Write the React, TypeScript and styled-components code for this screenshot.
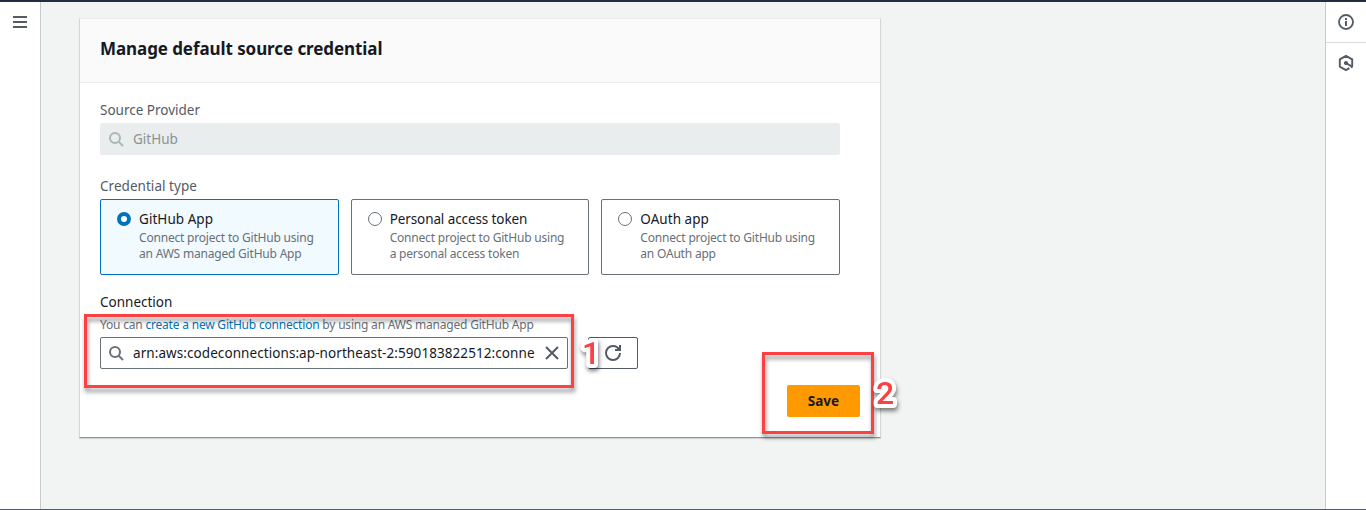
import React from 'react';
import styled, { createGlobalStyle, css } from 'styled-components';

const GlobalStyle = createGlobalStyle`
  *, *::before, *::after { box-sizing: border-box; }
  body {
    margin: 0;
    background: #f2f3f3;
    color: #16191f;
    font-family: "Noto Sans", "Open Sans", sans-serif;
    font-size: 14px;
    overflow: hidden;
  }
  svg { display: block; flex: none; }
`;

const Page = styled.div`
  position: relative;
  height: 510px;
  display: flex;
  border-top: 2px solid #232f3e;
  border-bottom: 1px solid #545b64;
`;

const SideNav = styled.nav`
  width: 41px;
  background: #fff;
  border-right: 1px solid #c5cccc;
  padding: 14px 0 0 13px;
`;

const Main = styled.main`
  flex: 1;
  padding: 16px 0 0 38px;
`;

const ToolRail = styled.aside`
  width: 41px;
  background: #fff;
  border-left: 1px solid #c5cccc;
`;

const RailButton = styled.button`
  width: 100%;
  height: 40px;
  padding: 0;
  border: 0;
  background: none;
  display: flex;
  align-items: center;
  justify-content: center;
  color: #545b64;
  & + & {
    height: 41px;
    border-top: 1px solid #d5dbdb;
  }
`;

const Card = styled.section`
  width: 802px;
  height: 420px;
  background: #fff;
  border: 1px solid #d2d8d8;
  border-top-color: #eaeded;
  border-bottom-color: #879596;
  box-shadow: 0 1px 1px rgba(0, 28, 36, 0.15);
  border-radius: 1px;
`;

const CardHeader = styled.header`
  height: 64px;
  background: #fafafa;
  border-bottom: 1px solid #eaeded;
  padding: 18px 20px 0;
`;

const Title = styled.h2`
  margin: 0;
  font-size: 17px;
  line-height: 24px;
  font-weight: 700;
  letter-spacing: -0.08px;
`;

const Form = styled.form`
  padding: 16px 40px 0 20px;
`;

const Label = styled.div<{ $strong?: boolean; $track?: number }>`
  font-size: 13.5px;
  line-height: 22px;
  height: 22px;
  color: ${(p) => (p.$strong ? '#16191f' : '#545b64')};
  letter-spacing: ${(p) => p.$track ?? 0}px;
`;

const Hint = styled.div`
  font-size: 12px;
  line-height: 16px;
  letter-spacing: -0.2px;
  color: #687078;
  white-space: nowrap;
`;

const Link = styled.a`
  color: #0073bb;
`;

const SearchBox = styled.div<{ $disabled?: boolean }>`
  height: 32px;
  display: flex;
  align-items: center;
  padding: 0 7px;
  border: 1px solid #687078;
  border-radius: 2px;
  background: #fff;
  color: #687078;
  ${(p) =>
    p.$disabled &&
    css`
      margin: 2px 0 20px;
      background: #eaeded;
      border-color: #eaeded;
      color: #aab7b8;
    `}
`;

const SearchValue = styled.span<{ $disabled?: boolean; $track?: number }>`
  flex: 1;
  margin-left: 9px;
  font-size: 13.5px;
  line-height: 20px;
  white-space: nowrap;
  color: ${(p) => (p.$disabled ? '#879596' : '#16191f')};
  letter-spacing: ${(p) => p.$track ?? 0}px;
`;

const Tiles = styled.div`
  display: grid;
  grid-template-columns: repeat(3, 1fr);
  gap: 12px;
  margin: 2px 0 16px;
`;

const Tile = styled.label<{ $selected?: boolean }>`
  height: 76px;
  display: flex;
  gap: 8px;
  padding: 8px 0 0 16px;
  border: 1px solid ${(p) => (p.$selected ? '#0073bb' : '#687078')};
  border-radius: 2px;
  background: ${(p) => (p.$selected ? '#f1faff' : '#fff')};
`;

const Radio = styled.span<{ $selected?: boolean }>`
  flex: none;
  width: 14px;
  height: 14px;
  margin-top: 4px;
  border-radius: 50%;
  background: #fff;
  border: ${(p) => (p.$selected ? '4px solid #0073bb' : '1px solid #687078')};
`;

const ConnectionHint = styled(Hint)`
  margin: 4px 0;
`;

const ConnectionRow = styled.div`
  display: flex;
  gap: 20px;
`;

const ConnectionSearch = styled(SearchBox)`
  width: 468px;
`;

const RefreshButton = styled.button`
  width: 50px;
  height: 32px;
  padding: 0;
  border: 1px solid #545b64;
  border-radius: 2px;
  background: #fff;
  color: #545b64;
  display: flex;
  align-items: center;
  justify-content: center;
`;

const Actions = styled.div`
  display: flex;
  justify-content: flex-end;
  padding: 16px 20px 0 0;
`;

const SaveButton = styled.button`
  width: 73px;
  height: 32px;
  padding: 0;
  border: 0;
  border-radius: 2px;
  background: #ff9900;
  color: #16191f;
  font: 700 13.5px/20px "Noto Sans", sans-serif;
`;

const Highlight = styled.div<{ $x: number; $y: number; $w: number; $h: number }>`
  position: absolute;
  left: ${(p) => p.$x}px;
  top: ${(p) => p.$y}px;
  width: ${(p) => p.$w}px;
  height: ${(p) => p.$h}px;
  border: 3px solid #fb4141;
  filter: drop-shadow(1px 4px 2px rgba(0, 0, 0, 0.42));
  pointer-events: none;
`;

const StepBadge = styled.svg<{ $x: number; $y: number }>`
  position: absolute;
  left: ${(p) => p.$x}px;
  top: ${(p) => p.$y}px;
  overflow: visible;
  filter: drop-shadow(1px 3px 2px rgba(0, 0, 0, 0.5));
  text {
    font: 500 32px Roboto, "Liberation Sans", sans-serif;
    fill: #fb4141;
    stroke: #fff;
    stroke-width: 8px;
    stroke-linejoin: round;
    paint-order: stroke fill;
  }
`;

const StepNumber = ({ x, y, value }: { x: number; y: number; value: number }) => (
  <StepBadge $x={x} $y={y} width="30" height="38" viewBox="0 0 30 38">
    <text x="6" y="30">{value}</text>
  </StepBadge>
);

const SearchIcon = () => (
  <svg width="16" height="16" viewBox="0 0 16 16" fill="none" stroke="currentColor" strokeWidth="2">
    <circle cx="7" cy="7" r="5" />
    <path d="M10.6 10.6 15 15" />
  </svg>
);

const CloseIcon = () => (
  <svg width="16" height="16" viewBox="0 0 16 16" fill="none" stroke="#545b64" strokeWidth="2">
    <path d="m2 2 12 12M14 2 2 14" />
  </svg>
);

const RefreshIcon = () => (
  <svg width="16" height="16" viewBox="0 0 16 16" fill="none" stroke="currentColor" strokeWidth="2">
    <path d="M10 5h5V0" />
    <path d="M15 8a6.96 6.96 0 0 1-7 7 6.96 6.96 0 0 1-7-7 6.96 6.96 0 0 1 7-7 6.87 6.87 0 0 1 6.3 4" />
  </svg>
);

const MenuIcon = () => (
  <svg width="14" height="12" viewBox="0 0 14 12" fill="#545b64">
    <path d="M0 0h14v2H0zM0 5h14v2H0zM0 10h14v2H0z" />
  </svg>
);

const InfoIcon = () => (
  <svg width="16" height="16" viewBox="0 0 16 16" fill="none" stroke="currentColor" strokeWidth="2">
    <circle cx="8" cy="8" r="7" strokeWidth="1.8" />
    <path d="M8 4v2M8 7v5" />
  </svg>
);

const HexIcon = () => (
  <svg width="16" height="16" viewBox="0 0 16 16" fill="none" stroke="currentColor" strokeWidth="1.9">
    <path d="M11.4 13.2 8 15.1 1.8 11.6V4.4L8 .9l6.2 3.5v7.2l-1.4.8" strokeLinejoin="round" />
    <path d="m8 8 5.6 3.4" />
    <circle cx="8" cy="8" r="1.1" fill="currentColor" />
  </svg>
);

const credentialTypes = [
  { name: 'GitHub App', lines: ['Connect project to GitHub using', 'an AWS managed GitHub App'], selected: true },
  { name: 'Personal access token', lines: ['Connect project to GitHub using', 'a personal access token'] },
  { name: 'OAuth app', lines: ['Connect project to GitHub using', 'an OAuth app'] },
];

export default function App() {
  return (
    <>
      <GlobalStyle />
      <Page>
        <SideNav>
          <MenuIcon />
        </SideNav>
        <Main>
          <Card>
            <CardHeader>
              <Title>Manage default source credential</Title>
            </CardHeader>
            <Form>
              <Label>Source Provider</Label>
              <SearchBox $disabled>
                <SearchIcon />
                <SearchValue $disabled>GitHub</SearchValue>
              </SearchBox>
              <Label $track={0.04}>Credential type</Label>
              <Tiles>
                {credentialTypes.map((type) => (
                  <Tile key={type.name} $selected={type.selected}>
                    <Radio $selected={type.selected} />
                    <div>
                      <Label $strong $track={type.name === 'Personal access token' ? -0.1 : 0.05}>
                        {type.name}
                      </Label>
                      {type.lines.map((line) => (
                        <Hint key={line}>{line}</Hint>
                      ))}
                    </div>
                  </Tile>
                ))}
              </Tiles>
              <Label $strong>Connection</Label>
              <ConnectionHint>
                You can <Link>create a new GitHub connection</Link> by using an AWS managed GitHub App
              </ConnectionHint>
              <ConnectionRow>
                <ConnectionSearch>
                  <SearchIcon />
                  <SearchValue $track={0.075}>arn:aws:codeconnections:ap-northeast-2:590183822512:conne</SearchValue>
                  <CloseIcon />
                </ConnectionSearch>
                <RefreshButton type="button">
                  <RefreshIcon />
                </RefreshButton>
              </ConnectionRow>
            </Form>
            <Actions>
              <SaveButton type="button">Save</SaveButton>
            </Actions>
          </Card>
        </Main>
        <ToolRail>
          <RailButton>
            <InfoIcon />
          </RailButton>
          <RailButton>
            <HexIcon />
          </RailButton>
        </ToolRail>
        <Highlight $x={84} $y={312} $w={490} $h={74} />
        <Highlight $x={762} $y={350} $w={112} $h={82} />
        <StepNumber x={576} y={332} value={1} />
        <StepNumber x={870} y={372} value={2} />
      </Page>
    </>
  );
}
